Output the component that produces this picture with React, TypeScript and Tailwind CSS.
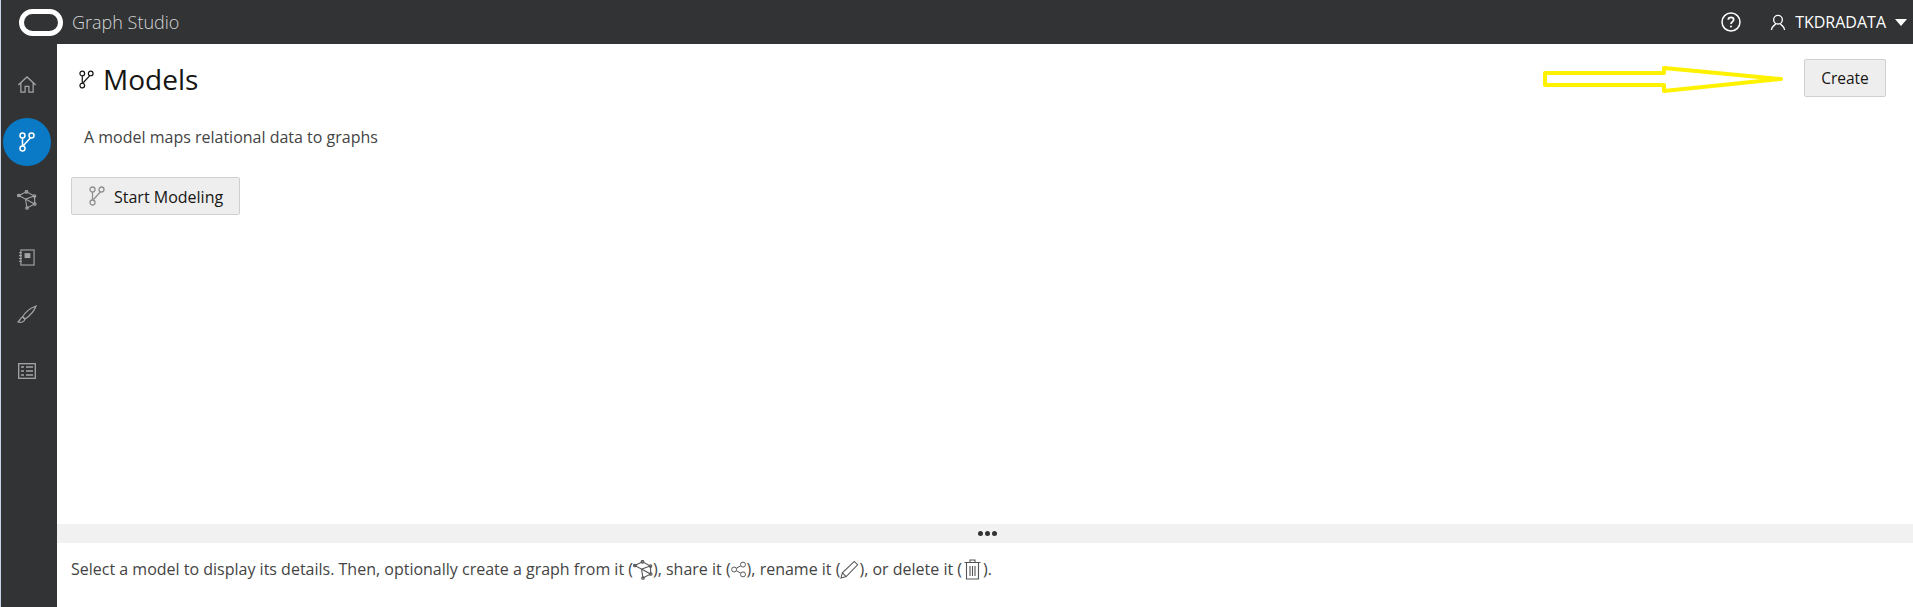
import React from "react";

const Branch = ({ className = "", sw = 1.3 }: { className?: string; sw?: number }) => (
  <svg viewBox="0 0 16 20" className={className} fill="none" stroke="currentColor" strokeWidth={sw}>
    <circle cx="3.5" cy="3.5" r="2.5" />
    <circle cx="12.5" cy="3.5" r="2.5" />
    <circle cx="3.5" cy="16.5" r="2.5" />
    <path d="M3.5 6v8M11.5 5.8 L4.5 13.5" />
  </svg>
);

const GraphIcon = ({ className = "" }: { className?: string }) => (
  <svg viewBox="0 0 20 20" className={className} fill="none" stroke="currentColor" strokeWidth="1.1">
    <path d="M1.8 5.5 L9.5 1.8 L17.5 6 L17.8 14 L10 18 L8.5 9 Z M9 9 L17 6 M8.5 9 L17.5 14" />
    <circle cx="1.8" cy="5.5" r="1.3" /><circle cx="9.5" cy="1.8" r="1.3" /><circle cx="17.5" cy="6" r="1.3" />
    <circle cx="17.8" cy="14" r="1.3" /><circle cx="10" cy="18" r="1.3" />
  </svg>
);

const Home = () => (
  <svg viewBox="0 0 20 18" className="h-[17px] w-5 text-[#a6a6a6]" fill="none" stroke="currentColor" strokeWidth="1.3">
    <path d="M0.8 9.5 L10 1 L19.2 9.5 M3.5 7.5 V17 H8 V11 H12 V17 H16.5 V7.5" />
  </svg>
);

const Notebook = () => (
  <svg viewBox="0 0 17 18" className="h-[17px] w-4 text-[#a6a6a6]" fill="none" stroke="currentColor" strokeWidth="1.2">
    <rect x="2" y="1" width="14" height="16" />
    <rect x="6.5" y="5" width="5" height="4" fill="currentColor" />
    <path d="M0 4h3M0 7h3M0 10h3M0 13h3" />
  </svg>
);

const Brush = () => (
  <svg viewBox="0 0 20 19" className="h-[19px] w-5 text-[#a6a6a6]" fill="none" stroke="currentColor" strokeWidth="1.2">
    <path d="M19 1 C14 3 8 7 5.5 12 L8 14 C12.5 11 17 7 19 1 Z" />
    <path d="M5.5 12 C3.5 12.5 3.5 15 1 17 C4 18 7.5 17 8 14 Z" />
  </svg>
);

const Table = () => (
  <svg viewBox="0 0 18 16" className="h-4 w-[18px] text-[#a6a6a6]" fill="none" stroke="currentColor" strokeWidth="1.3">
    <rect x="0.7" y="0.7" width="16.6" height="14.6" />
    <path d="M3 4h3M8 4h7M3 8h3M8 8h7M3 12h3M8 12h7" strokeWidth="1.6" />
  </svg>
);

const Share = () => (
  <svg viewBox="0 0 18 18" className="inline-block h-[17px] w-4 align-[-3px] text-[#555]" fill="none" stroke="currentColor" strokeWidth="1.1">
    <circle cx="3.5" cy="9" r="2.8" /><circle cx="13.5" cy="3.5" r="2.8" /><circle cx="13.5" cy="14.5" r="2.8" />
    <path d="M6 7.6 L11 4.9 M6 10.4 L11 13.1" />
  </svg>
);

const Pencil = () => (
  <svg viewBox="0 0 20 20" className="inline-block h-[19px] w-[19px] align-[-4px] text-[#555]" fill="none" stroke="currentColor" strokeWidth="1.1">
    <path d="M1 19 L2.5 13.5 L15 1.5 L18.5 5 L6.5 17.5 Z M2.5 13.5 L6.5 17.5" />
  </svg>
);

const Trash = () => (
  <svg viewBox="0 0 17 21" className="mx-0.5 inline-block h-[21px] w-[17px] align-[-5px] text-[#555]" fill="none" stroke="currentColor" strokeWidth="1.1">
    <path d="M0.5 3.5H16.5M6 3.5V1H11V3.5M2.5 3.5V20H14.5V3.5M6 7V17M8.5 7V17M11 7V17" />
  </svg>
);

export default function App() {
  return (
    <div className="flex h-[607px] w-[1913px] flex-col overflow-hidden bg-white font-['Open_Sans','Noto_Sans',sans-serif] text-[#161513]">
      <header className="flex h-11 shrink-0 items-center border-l border-[#c9d3e6] bg-[#313335] pl-[18px] pr-[10px]">
        <div className="h-[27px] w-[44px] rounded-[14px] border-[5px] border-white" />
        <span className="ml-[9px] text-[18px] font-light text-[#d6d6d6]">Graph Studio</span>
        <div className="ml-auto flex items-center text-white">
          <svg viewBox="0 0 20 20" className="h-5 w-5" fill="none" stroke="currentColor" strokeWidth="1.5">
            <circle cx="10" cy="10" r="9" />
            <path d="M7.3 7.8 C7.3 4.6 12.7 4.6 12.7 7.8 C12.7 9.8 10 9.8 10 12" strokeWidth="1.7" />
            <circle cx="10" cy="14.6" r="1" fill="currentColor" stroke="none" />
          </svg>
          <svg viewBox="0 0 16 18" className="ml-[29px] h-[17px] w-4" fill="none" stroke="currentColor" strokeWidth="1.4">
            <circle cx="8" cy="6" r="4.6" />
            <path d="M5.5 10 C5.5 12 1 12.5 1 17 M10.5 10 C10.5 12 15 12.5 15 17" />
          </svg>
          <span className="ml-[9px] text-[16px]">TKDRADATA</span>
          <span className="ml-[9px] mr-[-4px] h-0 w-0 border-x-[6px] border-t-[7px] border-x-transparent border-t-white" />
        </div>
      </header>
      <div className="flex min-h-0 flex-1">
        <nav className="flex w-[57px] shrink-0 flex-col items-center border-l border-[#c9d3e6] bg-[#313335] pr-[5px]">
          <div className="flex h-[74px] w-12 items-center justify-center pt-[6px]"><Home /></div>
          <div className="flex h-12 w-12 shrink-0 items-center justify-center rounded-full bg-[#0a7ac6] text-white">
            <Branch className="h-5 w-4" sw={1.5} />
          </div>
          <div className="mt-[10px] flex h-12 w-12 items-center justify-center text-[#a6a6a6]"><GraphIcon className="h-5 w-5" /></div>
          <div className="mt-[9px] flex h-12 w-12 items-center justify-center"><Notebook /></div>
          <div className="mt-[9px] flex h-12 w-12 items-center justify-center"><Brush /></div>
          <div className="mt-[9px] flex h-12 w-12 items-center justify-center"><Table /></div>
        </nav>
        <main className="relative flex min-w-0 flex-1 flex-col">
          <div className="flex-1 pl-[14px] pr-[27px]">
            <div className="flex h-[53px] items-end justify-between">
              <div className="flex items-center pl-[8px]">
                <Branch className="h-[19px] w-[15px] text-[#161513]" />
                <h1 className="ml-[9px] text-[28px] leading-9">Models</h1>
              </div>
              <button className="h-[38px] w-[82px] rounded-[2px] border border-[#cfcfcf] bg-[#eeeeee] pt-px text-[15.5px]">Create</button>
            </div>
            <p className="mt-[30px] pl-[13px] text-[16px] leading-5 text-[#444]">A model maps relational data to graphs</p>
            <button className="mt-[30px] flex h-[38px] w-[169px] items-center rounded-[2px] border border-[#cfcfcf] bg-[#eeeeee] pl-[17px] text-[16px]">
              <Branch className="h-5 w-4 text-[#8f8f8f]" />
              <span className="ml-[9px] pt-px">Start Modeling</span>
            </button>
          </div>
          <div className="flex h-[19px] shrink-0 items-center justify-center gap-[2px] bg-[#f1f1f1] pl-[5px]">
            <span className="h-[5px] w-[5px] rounded-full bg-[#333]" />
            <span className="h-[5px] w-[5px] rounded-full bg-[#333]" />
            <span className="h-[5px] w-[5px] rounded-full bg-[#333]" />
          </div>
          <div className="flex h-[64px] shrink-0 items-start pl-[14px] pt-[16px] text-[16px] leading-5 text-[#444]">
            <p>
              Select a model to display its details. Then, optionally create a graph from it (
              <GraphIcon className="inline-block h-[20px] w-[20px] align-[-5px] text-[#555]" />
              ), share it (<Share />), rename it (<Pencil />), or delete it (<Trash />).
            </p>
          </div>
          <svg viewBox="0 0 244 32" className="absolute left-[1486px] top-[20px] h-8 w-[244px]" fill="none" stroke="#fff200" strokeWidth="4">
            <path d="M2 9 H121 V4 L238 15 L121 27 V21 H2 Z" strokeLinejoin="round" />
          </svg>
        </main>
      </div>
    </div>
  );
}
